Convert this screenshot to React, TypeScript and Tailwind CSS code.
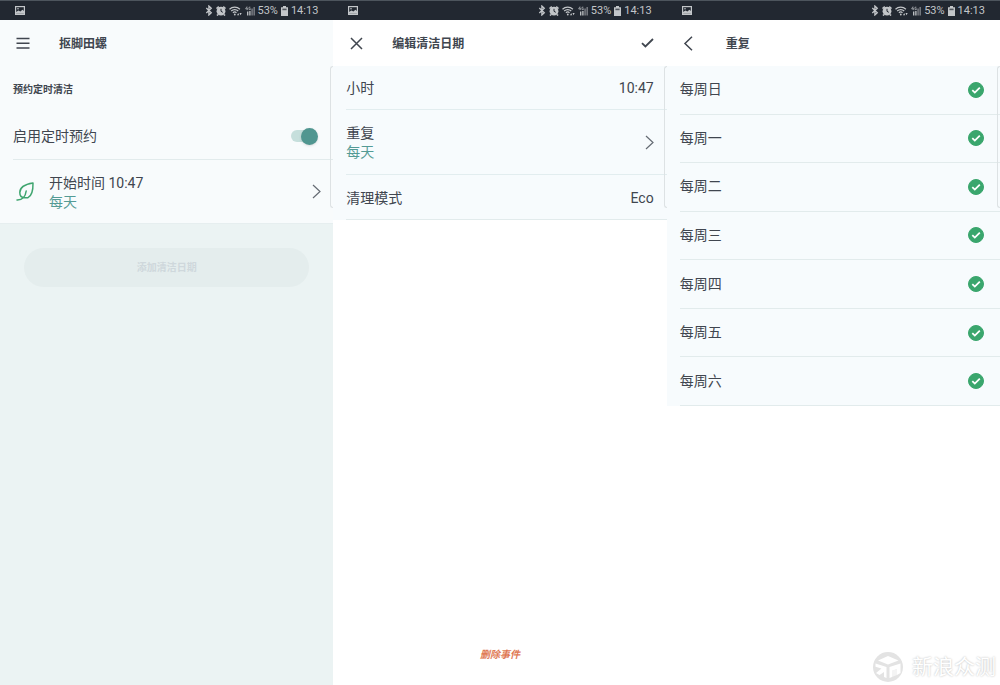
import { useState, type ReactNode } from "react";
import clsx from "clsx";

const weekdays = ["每周日", "每周一", "每周二", "每周三", "每周四", "每周五", "每周六"];

function StatusBar() {
    return (
        <div className="h-5 shrink-0 flex items-center justify-between border-t border-[#4d555d] bg-[#222831] px-[15px] text-[#c3c6c9]">
            <svg className="w-[10px] h-[9px]" viewBox="0 0 10 9" fill="none">
                <rect x="0.6" y="0.6" width="8.8" height="7.8" fill="#222831" stroke="currentColor" strokeWidth="1.2" />
                <path d="M1 7.5V6l2.4-1.6 2 1 2-1.6L9 5v2.8H1z" fill="currentColor" />
                <circle cx="3" cy="2.8" r="0.8" fill="currentColor" />
            </svg>
            <div className="flex items-center gap-[3px] text-[11px] leading-none">
                <svg className="w-[8px] h-[11px]" viewBox="0 0 7 11" fill="none" stroke="currentColor" strokeWidth="1.3">
                    <path d="M0.8 3l5 4.8-2.4 2.2V1l2.4 2.2-5 4.8" />
                </svg>
                <svg className="w-[10px] h-[10px]" viewBox="0 0 10 10">
                    <circle cx="5" cy="5.2" r="4.4" fill="currentColor" />
                    <path d="M0.5 2.6L2.8 0.6M9.5 2.6L7.2 0.6M2 8.4L1 9.6M8 8.4l1 1.2" stroke="currentColor" strokeWidth="1.6" />
                    <path d="M5 2.8v2.5l1.8 1" fill="none" stroke="#222831" strokeWidth="1" />
                </svg>
                <svg className="w-[13px] h-[10px]" viewBox="0 0 13 10" fill="none" stroke="currentColor">
                    <path d="M0.5 3.2a7.6 7.6 0 0 1 10.4 0M2.2 5a5 5 0 0 1 7 0M3.9 6.8a2.6 2.6 0 0 1 3.6 0" strokeWidth="1.2" />
                    <circle cx="5.8" cy="8.5" r="0.9" fill="currentColor" stroke="none" />
                    <path d="M8 9.2l1.2-2.200 1 2.200zM10.500 7l1 2.200 1.200-2.200z" fill="currentColor" stroke="none" />
                </svg>
                <svg className="w-[10px] h-[10px]" viewBox="0 0 10 10" fill="none" stroke="currentColor">
                    <path d="M2 0.5L0.6 2.9h2.2M2.2 1.5v2.6M5.4 1.2H4v2.4h1.4V2.4" strokeWidth="0.8" opacity="0.8" />
                    <path d="M2.700 9.500V5.500M4.900 9.500V5" strokeWidth="1.3" />
                    <path d="M7.1 9.500V2.500M9.200 9.500V1" strokeWidth="1.6" opacity="0.5" />
                </svg>
                <span>53%</span>
                <svg className="w-[7px] h-[10px]" viewBox="0 0 7 10">
                    <path d="M2 0h3v1.2h2V10H0V1.2h2z" fill="currentColor" />
                    <path d="M1.4 2.6h4.2v1.6H1.4z" fill="#222831" opacity="0.7" />
                </svg>
                <span>14:13</span>
            </div>
        </div>
    );
}

function Screen({ className, children }: { className?: string; children: ReactNode }) {
    return (
        <section className={clsx("relative min-w-0 flex flex-col", className)}>
            <StatusBar />
            {children}
            {/* edge panel handle */}
            <span className="absolute right-0 top-[66px] h-[142px] w-[3px] rounded-l border border-r-0 border-[#dde2e4]" />
        </section>
    );
}

function Header({ title, label, icon, action }: { title: string; label: string; icon: string; action?: ReactNode }) {
    return (
        <header className="h-[46px] shrink-0 flex items-center pl-4 pr-[13px]">
            <button aria-label={label} className="mr-7">
                <svg className="size-[15px]" viewBox="0 0 15 15" fill="none" stroke="#40464f" strokeWidth="1.5">
                    <path d={icon} />
                </svg>
            </button>
            <h1 className="flex-1 pt-px text-[12px] font-bold">{title}</h1>
            {action}
        </header>
    );
}

function ChevronRight() {
    return (
        <svg className="w-[9px] h-[15px]" viewBox="0 0 9 15" fill="none" stroke="#656b73" strokeWidth="1.2">
            <path d="M1 1l7 6.500L1 14" />
        </svg>
    );
}

function ScheduleScreen() {
    const [enabled, setEnabled] = useState(true);

    return (
        <Screen className="bg-[#ebf3f3]">
            <div className="bg-[#f8fbfc]">
                <Header title="抠脚田螺" label="菜单" icon="M0.500 2.500h13M0.500 7.200h13M0.500 11.900h13" />
                <h2 className="h-[46px] flex items-center pl-[13px] text-[10px] font-bold">预约定时清洁</h2>
                <label className="ml-[13px] h-12 flex items-center justify-between border-b border-[#e2ebec] pt-px pr-[15px]">
                    启用定时预约
                    <span className="relative flex h-[18px] w-[27px] items-center">
                        <input
                            type="checkbox"
                            checked={enabled}
                            onChange={() => setEnabled(!enabled)}
                            className="peer h-3 w-6 appearance-none rounded-full bg-[#c6dfdc]"
                        />
                        <span className="pointer-events-none absolute left-0 size-[17px] rounded-full bg-[#509690] shadow-sm peer-checked:left-[10px]" />
                    </span>
                </label>
                <button className="w-full h-16 flex items-center border-b border-[#e6eeef] pl-4 text-left">
                    <svg className="size-[19px] mr-[14px] shrink-0" viewBox="0 0 19 19" fill="none" stroke="#3fa56f" strokeWidth="1.5" strokeLinecap="round" strokeLinejoin="round">
                        <path d="M17 1C9 2.200 3.800 5.500 3.800 10.600c0 3 1.800 5.100 4.600 5.100h3.600c3-1.600 5.200-5.200 5-14.700z" />
                        <path d="M1 18c5.200.2 8.400-3.200 9.200-9" />
                    </svg>
                    <span className="flex-1 pt-[2px] leading-[19px]">
                        <span className="block">开始时间 10:47</span>
                        <span className="block text-[#549b95]">每天</span>
                    </span>
                    <span className="mr-3">
                        <ChevronRight />
                    </span>
                </button>
            </div>
            <button disabled className="mx-6 mt-6 h-[39px] rounded-full bg-[#e4eded] text-[10px] font-bold text-[#cfd8dc]">
                添加清洁日期
            </button>
        </Screen>
    );
}

function EditScreen() {
    return (
        <Screen className="bg-white">
            <Header
                title="编辑清洁日期"
                label="关闭"
                icon="M2 2l11 11M13 2L2 13"
                action={
                    <button aria-label="保存">
                        <svg className="w-[13px] h-[10px]" viewBox="0 0 13 10" fill="none" stroke="#40464f" strokeWidth="1.8">
                            <path d="M1 5.200l3.400 3.300L12 1" />
                        </svg>
                    </button>
                }
            />
            <div className="bg-[#f7fbfd] pl-[13px]">
                <div className="h-11 flex items-center justify-between border-b border-[#e2edef] pt-[2px] pr-[13px]">
                    <span>小时</span>
                    <span>10:47</span>
                </div>
                <button className="w-full h-[65px] flex items-center justify-between border-b border-[#e2edef] pt-px pr-[13px] text-left leading-[19px]">
                    <span>
                        <span className="block">重复</span>
                        <span className="block text-[#549b95]">每天</span>
                    </span>
                    <ChevronRight />
                </button>
                <div className="h-[45px] flex items-center justify-between border-b border-[#e2ebec] pt-[2px] pr-[13px]">
                    <span>清理模式</span>
                    <span>Eco</span>
                </div>
            </div>
            <button className="mt-auto mb-[22px] self-center text-[10px] leading-4 font-bold italic text-[#e07a55]">删除事件</button>
        </Screen>
    );
}

function RepeatScreen() {
    const [selected, setSelected] = useState(weekdays);

    const toggle = (day: string) =>
        setSelected(selected.includes(day) ? selected.filter((d) => d !== day) : [...selected, day]);

    return (
        <Screen className="bg-white">
            <Header title="重复" label="返回" icon="M9 0.800L2 7.500l7 6.700" />
            <div className="h-[340px] grid grid-rows-7 bg-[#f7fbfd] pl-[13px]">
                {weekdays.map((day) => (
                    <label key={day} className="flex items-center justify-between border-b border-[#e2ebec] pr-4">
                        {day}
                        <span className="relative size-4">
                            <input
                                type="checkbox"
                                checked={selected.includes(day)}
                                onChange={() => toggle(day)}
                                className="block size-4 appearance-none rounded-full border border-[#3aa66d] checked:bg-[#3aa66d]"
                            />
                            <svg className="pointer-events-none absolute inset-0 size-4" viewBox="0 0 16 16" fill="none" stroke="white" strokeWidth="1.8">
                                <path d="M4.300 8.200l2.500 2.400 5-5" />
                            </svg>
                        </span>
                    </label>
                ))}
            </div>
            <div className="mt-auto mb-[2px] flex items-center justify-end gap-2 pr-1 text-[#e3e3e3]">
                <svg className="size-8" viewBox="0 0 32 32">
                    <circle cx="16" cy="16" r="15" fill="currentColor" />
                    <path d="M6 9.500L16 5l10.500 4.500L16 13.500z" fill="white" />
                    <path d="M3.500 12.500l11 3.500v11L12 26v-5l-4.500 3L4 22l5.500-4.500-6-1.800z" fill="white" />
                    <path d="M17.500 16l11-3.500V22L25 24v-6l-5 1.800V26l-2.500 1z" fill="white" />
                    <path d="M20 19.800L25 18v6l-5 2z" fill="white" opacity="0.6" />
                </svg>
                <span className="text-[21px] leading-8 text-white [text-shadow:0_0_2px_#b5b5b5]">新浪众测</span>
            </div>
        </Screen>
    );
}

export default function App() {
    return (
        <main className="min-h-screen grid grid-cols-3 bg-white font-[Roboto,'Noto_Sans_CJK_SC',sans-serif] text-[14px] text-[#40464f]">
            <ScheduleScreen />
            <EditScreen />
            <RepeatScreen />
        </main>
    );
}
